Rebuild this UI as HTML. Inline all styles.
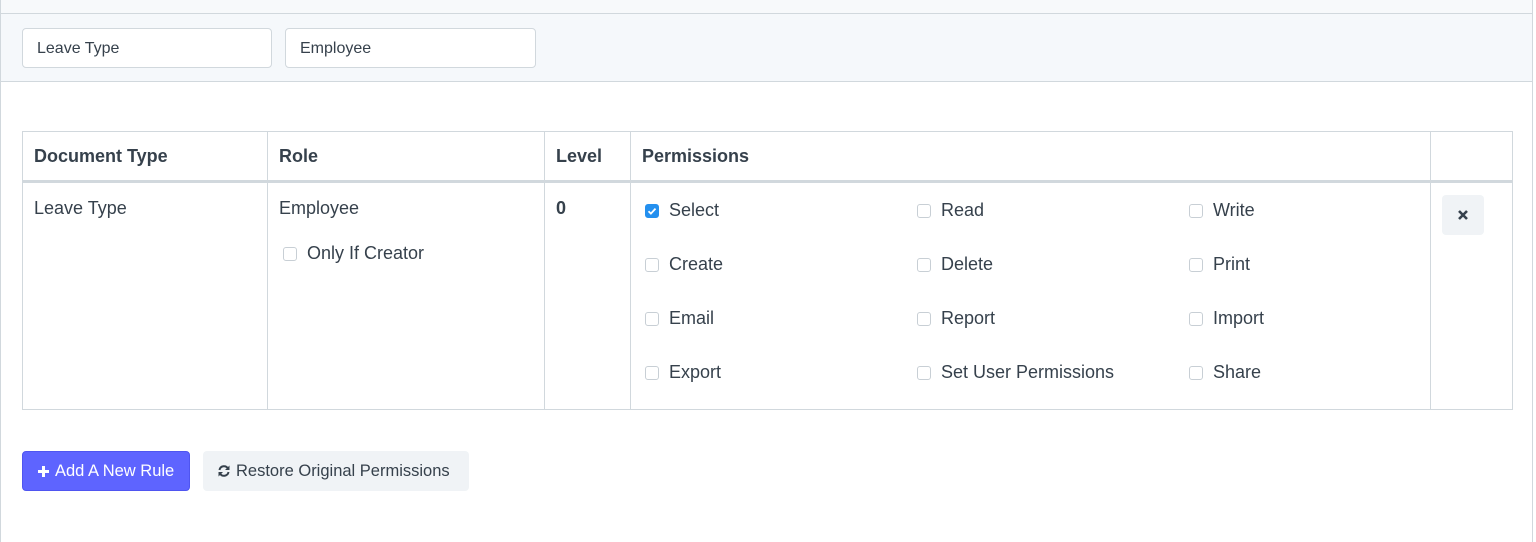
<!DOCTYPE html>
<html><head><style>
*{box-sizing:border-box}
html,body{margin:0;width:1536px;height:542px;overflow:hidden}
body{background:#fff;font-family:"Liberation Sans",sans-serif;color:#36414c;position:relative}
.wrap{position:absolute;left:0;top:-1px;width:1533px;height:560px;border-left:1px solid #d1d8dd;border-right:1px solid #d1d8dd}
.top{position:absolute;left:0;top:0;width:100%;height:15px;background:#f7f9fb;border-bottom:1px solid #d1d8dd}
.bar{position:absolute;left:0;top:15px;width:100%;height:68px;background:#f5f8fb;border-bottom:1px solid #d1d8dd}
.inp{position:absolute;top:14px;height:40px;width:250px;background:#fff;border:1px solid #d1d8dd;border-radius:4px;font-size:16px;padding:11px 14px}
table{position:absolute;left:22px;top:131px;width:1490px;border-collapse:collapse;font-size:18px;table-layout:fixed}
td,th{border:1px solid #d1d8dd;vertical-align:top;text-align:left;padding:0 11px}
th{height:50px;vertical-align:middle;font-weight:bold;border-bottom:3px solid #d1d8dd}
td{height:228px;padding-top:15px}
.cb{display:inline-block;width:14px;height:14px;border:1px solid #c8cfd5;border-radius:3px;vertical-align:-2px;margin-right:10px;background:#fff}
.cb.on{background:#2490ef;border-color:#2490ef;position:relative}
.grid{display:grid;grid-template-columns:272px 272px 240px;row-gap:31px;margin-top:1px}
.grid div{height:23px}
.x{width:42px;height:40px;background:#f0f3f6;border-radius:4px;margin:-3px 0 0 0;display:flex;align-items:center;justify-content:center}
.btn{position:absolute;top:451px;height:40px;border-radius:4px;font-size:16.5px;display:flex;align-items:center;padding:0 14px}
</style></head><body>
<div class="wrap">
<div class="top"></div>
<div class="bar"><div class="inp" style="left:21px">Leave Type</div><div class="inp" style="left:284px;width:251px">Employee</div></div>
</div>
<table>
<colgroup><col style="width:245px"><col style="width:277px"><col style="width:86px"><col style="width:800px"><col style="width:82px"></colgroup>
<tr><th>Document Type</th><th>Role</th><th>Level</th><th>Permissions</th><th></th></tr>
<tr><td>Leave Type</td><td>Employee<div style="margin-top:24px;padding-left:4px"><span class="cb"></span>Only If Creator</div></td><td><b>0</b></td>
<td style="padding-left:14px;padding-top:16px"><div class="grid">
<div><span class="cb on"><svg width="14" height="14" viewBox="0 0 14 14" style="position:absolute;left:-1px;top:-1px"><path d="M3.5 7.2l2.4 2.4 4.6-5" stroke="#fff" stroke-width="1.8" fill="none"/></svg></span>Select</div><div><span class="cb"></span>Read</div><div><span class="cb"></span>Write</div>
<div><span class="cb"></span>Create</div><div><span class="cb"></span>Delete</div><div><span class="cb"></span>Print</div>
<div><span class="cb"></span>Email</div><div><span class="cb"></span>Report</div><div><span class="cb"></span>Import</div>
<div><span class="cb"></span>Export</div><div><span class="cb"></span>Set User Permissions</div><div><span class="cb"></span>Share</div>
</div></td>
<td><div class="x"><svg width="12" height="12" viewBox="0 0 12 12"><path d="M2 2l8 8M10 2l-8 8" stroke="#36414c" stroke-width="2.6"/></svg></div></td></tr>
</table>
<div class="btn" style="left:22px;width:168px;background:#5e64ff;border:1px solid #4f55f0;color:#fff"><svg width="13" height="13" viewBox="0 0 13 13" style="margin-right:5px"><path d="M6.5 1v11M1 6.5h11" stroke="#fff" stroke-width="3"/></svg>Add A New Rule</div>
<div class="btn" style="left:203px;width:266px;background:#f0f3f6"><svg width="14" height="14" viewBox="0 0 14 14" style="margin-right:5px"><path d="M2.5 6A4.6 4.6 0 0 1 11 4.5M11.5 8A4.6 4.6 0 0 1 3 9.5" stroke="#36414c" stroke-width="2" fill="none"/><path d="M12.5 1.5v4.5h-4.5zM1.5 12.5v-4.5h4.5z" fill="#36414c"/></svg>Restore Original Permissions</div>
</body></html>
